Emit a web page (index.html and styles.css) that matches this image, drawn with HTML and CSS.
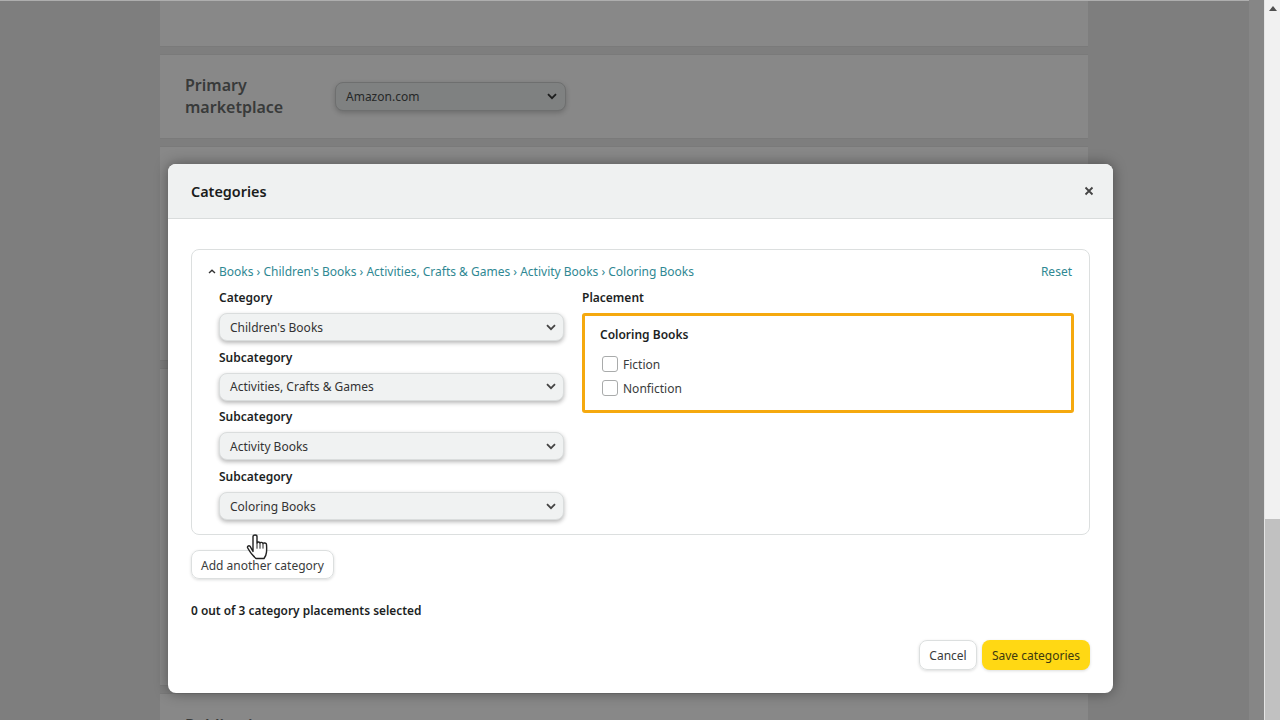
FILE: index.html
```html
<!DOCTYPE html>
<html lang="en">
<head>
<meta charset="utf-8">
<title>Categories</title>
<link rel="stylesheet" href="styles.css">
</head>
<body>
<div class="window">
  <div class="page">
    <div class="card card-top"></div>
    <div class="card card-market">
      <div class="market-label">Primary marketplace</div>
      <div class="market-select"><span>Amazon.com</span>
        <svg class="chev" viewBox="0 0 10 7"><path d="M1 1.2 5 5.2 9 1.2"/></svg>
      </div>
    </div>
    <div class="card card-a"></div>
    <div class="card card-b"></div>
    <div class="card card-pub"><div class="pub-label">Publication</div></div>
  </div>
  <div class="stripe"></div>
  <div class="scrollbar">
    <div class="track"><svg class="arrow" viewBox="0 0 8 5"><path d="M4 0 8 5H0Z"/></svg></div>
    <div class="thumb"></div>
  </div>
</div>

<section class="modal">
  <header class="modal-head">
    <h2>Categories</h2>
    <svg class="close" viewBox="0 0 10 10"><path d="M1.5 1.5 8.5 8.5M8.5 1.5 1.5 8.5"/></svg>
  </header>
  <div class="modal-body">
    <div class="panel">
      <div class="crumbs">
        <svg class="caret" viewBox="0 0 8 5"><path d="M1 4 4 1.2 7 4"/></svg>
        <a>Books › Children's Books › Activities, Crafts &amp; Games › Activity Books › Coloring Books</a>
        <a class="reset">Reset</a>
      </div>
      <div class="columns">
        <div class="col-left">
          <div class="field"><label>Category</label>
            <div class="select"><span>Children's Books</span><svg class="chev" viewBox="0 0 10 7"><path d="M1 1.2 5 5.2 9 1.2"/></svg></div></div>
          <div class="field"><label>Subcategory</label>
            <div class="select"><span>Activities, Crafts &amp; Games</span><svg class="chev" viewBox="0 0 10 7"><path d="M1 1.2 5 5.2 9 1.2"/></svg></div></div>
          <div class="field"><label>Subcategory</label>
            <div class="select"><span>Activity Books</span><svg class="chev" viewBox="0 0 10 7"><path d="M1 1.2 5 5.2 9 1.2"/></svg></div></div>
          <div class="field"><label>Subcategory</label>
            <div class="select"><span>Coloring Books</span><svg class="chev" viewBox="0 0 10 7"><path d="M1 1.2 5 5.2 9 1.2"/></svg></div></div>
        </div>
        <div class="col-right">
          <label>Placement</label>
          <div class="placement">
            <div class="placement-title">Coloring Books</div>
            <div class="check"><span class="box"></span>Fiction</div>
            <div class="check"><span class="box"></span>Nonfiction</div>
          </div>
        </div>
      </div>
    </div>
    <div class="btn btn-add">Add another category</div>
    <div class="status">0 out of 3 category placements selected</div>
    <div class="actions">
      <div class="btn btn-cancel">Cancel</div>
      <div class="btn btn-save">Save categories</div>
    </div>
  </div>
</section>

<svg class="cursor" viewBox="0 0 22 28">
  <path d="M7 2.500c0-2 4-2 4 0V9c.3-1.300 2.800-1.300 3 .2.3-1.200 2.700-1 3 .4.4-1 3.500-.8 3.500 1 .2 2.400.2 5 0 7.500-.2 3-1.500 5-2.500 6.400h-8c-2-1.600-5.500-5.500-8.300-10.500-.8-1.500 1-2.800 2.300-1.800L7 17.500z"/>
  <path class="finger" d="M11 9.200v5.500M14 9.400v5.300M17 9.600v5"/>
</svg>
</body>
</html>
```
FILE: styles.css
```css
* { box-sizing: border-box; }
html, body { margin: 0; height: 720px; overflow: hidden; }
body { font-family: "Noto Sans", "Liberation Sans", sans-serif; font-size: 12px; color: #0f1111; background: #7e7e7e; }

.window { display: flex; height: 720px; }
.page { flex: 1; padding-left: 160px; border-top: 1px solid #aeaeae; overflow: hidden; }
.stripe { width: 15px; background: #868686; }
.scrollbar { width: 16px; display: flex; flex-direction: column; border-left: 1px solid #e6e6e6; }
.track { height: 519px; background: #f1f1f1; display: flex; justify-content: center; align-items: flex-start; padding-top: 6px; }
.arrow { width: 8px; height: 5px; fill: #505050; }
.thumb { flex: 1; background: #c1c1c1; }

.card { width: 928px; background: #888; margin-bottom: 9px; box-shadow: 0 -1px 0 #7a7a7a, 0 1px 0 #7a7a7a; }
.card-top { height: 45px; }
.card-market { height: 83px; display: flex; align-items: center; padding-left: 25px; }
.market-label { width: 150px; padding-bottom: 1px; font-size: 16px; line-height: 22px; font-weight: 600; color: #383a3a; }
.market-select { width: 231px; height: 29px; border-radius: 8px; background: #7f8181; border: 1px solid #6e6f6f; box-shadow: 0 2px 5px rgba(0,0,0,.2); display: flex; align-items: center; justify-content: space-between; padding: 0 8px 0 10px; font-size: 12px; color: #262828; }
.card-a { height: 213px; }
.card-b { height: 316px; }
.card-pub { height: 40px; padding: 20px 25px 0; }
.pub-label { font-size: 16px; line-height: 22px; font-weight: 600; color: #383a3a; }

.chev { width: 10px; height: 7px; fill: none; stroke: #444; stroke-width: 1.8; }
.market-select .chev { stroke: #1c1d1d; }

.modal { position: absolute; left: 168px; top: 164px; width: 945px; height: 529px; background: #fff; border-radius: 8px; box-shadow: 0 0 14px rgba(0,0,0,.4); overflow: hidden; }
.modal-head { height: 55px; background: #eff1f1; border-bottom: 1px solid #d9dcdc; display: flex; align-items: center; justify-content: space-between; padding: 0 19px 0 23px; }
.modal-head h2 { margin: 0; font-size: 14.4px; font-weight: 600; color: #1a1c1c; }
.close { width: 10px; height: 10px; fill: none; stroke: #444; stroke-width: 1.8; }
.modal-body { padding: 30px 23px 0; }

.panel { height: 286px; border: 1px solid #dcdfdf; border-radius: 8px; padding: 12px 17px 0 16px; }
.crumbs { display: flex; align-items: center; height: 18px; color: #2f8893; font-size: 12px; }
.caret { width: 8px; height: 5px; fill: none; stroke: #333; stroke-width: 1.400; margin-right: 3px; }
.crumbs a { white-space: nowrap; }
.crumbs .reset { margin-left: auto; }
.columns { display: grid; grid-template-columns: 345px 492px; column-gap: 18px; margin-top: 9px; padding-left: 11px; }
label { display: block; font-size: 12px; line-height: 16px; font-weight: 600; color: #1d1f1f; }
.field { height: 59.7px; padding-top: 1px; }
.select { height: 28px; margin-top: 7px; border-radius: 8px; background: #f0f2f2; border: 1px solid #dadddd; box-shadow: 0 2px 4px rgba(15,17,17,.3); display: flex; align-items: center; justify-content: space-between; padding: 0 7px 0 10px; font-size: 12px; color: #333; }
.col-right { padding-top: 1px; }
.placement { height: 100px; margin-top: 7px; border: 3px solid #f5a90f; border-radius: 3px; padding: 9px 15px; }
.placement-title { font-size: 12px; line-height: 20px; font-weight: 600; color: #1d1f1f; margin-bottom: 7px; }
.check { display: flex; align-items: center; height: 24px; font-size: 12px; color: #3a3c3c; }
.box { width: 16px; height: 16px; border: 1.500px solid #a9abab; border-radius: 3px; margin: 0 5px 0 2px; background: #fff; }

.btn { display: flex; align-items: center; justify-content: center; border-radius: 8px; font-size: 12px; color: #3a3c3c; }
.btn-add { width: 143px; height: 29px; margin-top: 15px; padding-top: 1px; border: 1px solid #dcdfdf; box-shadow: 0 1px 3px rgba(15,17,17,.15); }
.status { margin-top: 21px; line-height: 20px; font-size: 11.9px; font-weight: 600; color: #1d1f1f; }
.actions { display: flex; justify-content: flex-end; gap: 5px; margin-top: 20px; }
.btn-cancel { width: 58px; height: 30px; border: 1px solid #dcdfdf; box-shadow: 0 1px 3px rgba(15,17,17,.15); }
.btn-save { width: 108px; height: 30px; background: #ffd814; color: #3d3a10; box-shadow: 0 1px 3px rgba(15,17,17,.15); }

.cursor { position: absolute; left: 246px; top: 534px; width: 22px; height: 28px; }
.cursor path { fill: #fff; stroke: #222; stroke-width: 1.400; stroke-linejoin: round; }
.cursor .finger { fill: none; stroke-width: 1; }
```
